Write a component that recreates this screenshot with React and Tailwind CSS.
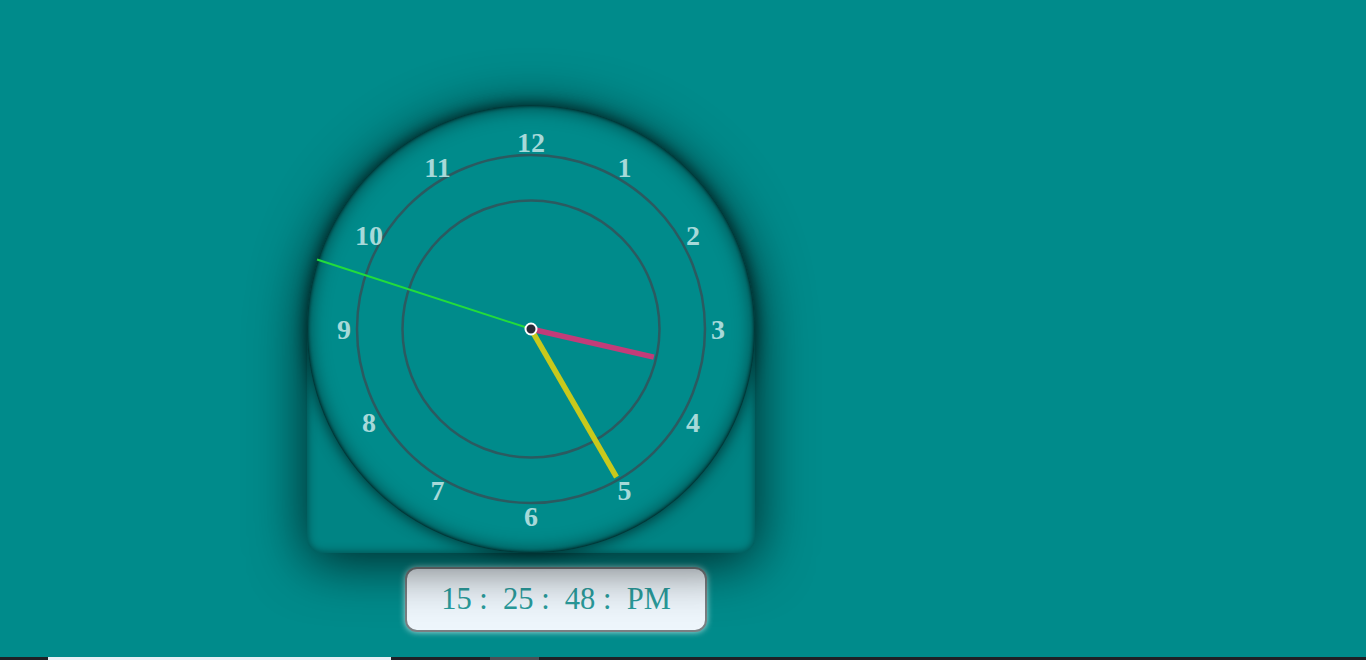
import React from "react";

const CX = 224;
const CY = 224;

const numbers = Array.from({ length: 12 }, (_, i) => {
  const n = i + 1;
  const a = (n * 30 * Math.PI) / 180;
  return { n, x: CX + 187 * Math.sin(a), y: CY - 187 * Math.cos(a) + 9.5 };
});

function handEnd(deg, len) {
  const a = (deg * Math.PI) / 180;
  return { x: CX + len * Math.sin(a), y: CY - len * Math.cos(a) };
}

const hour = handEnd(102.9, 126);
const minute = handEnd(150, 171);
const second = handEnd(288, 225);

const ClockFace = () => (
  <div className="relative w-[448px] h-[448px] rounded-[224px_224px_15px_15px] bg-[#008484] shadow-[0_8px_55px_rgba(0,0,0,0.75),inset_0_0_10px_rgba(0,0,0,0.5)]">
    <div className="absolute inset-0 rounded-full bg-[#008b8b] shadow-[0_0_16px_rgba(0,0,0,0.7),inset_0_0_4px_rgba(0,0,0,1),inset_0_0_20px_rgba(0,0,0,0.6)]" />
    <svg className="absolute inset-0" width="448" height="448" viewBox="0 0 448 448">
      <circle cx={CX} cy={CY} r="174" fill="none" stroke="#2b5a60" strokeWidth="2.5" />
      <circle cx={CX} cy={CY} r="128.5" fill="none" stroke="#2b5a60" strokeWidth="2.5" />
      {numbers.map((p) => (
        <text
          key={p.n}
          x={p.x}
          y={p.y}
          textAnchor="middle"
          fill="#a7d9d9"
          fontSize="28"
          fontWeight="700"
          fontFamily="'Liberation Serif', 'Times New Roman', serif"
        >
          {p.n}
        </text>
      ))}
      <line x1={CX} y1={CY} x2={hour.x} y2={hour.y} stroke="#c23c79" strokeWidth="5.5" />
      <line x1={CX} y1={CY} x2={minute.x} y2={minute.y} stroke="#c8c91c" strokeWidth="5.5" />
      <line x1={CX} y1={CY} x2={second.x} y2={second.y} stroke="#22dc3c" strokeWidth="2" />
      <circle cx={CX} cy={CY} r="5.5" fill="#2a2b38" stroke="#ffffff" strokeWidth="2" />
    </svg>
  </div>
);

export default function App() {
  return (
    <div className="h-screen flex flex-col overflow-hidden">
      <div className="flex-1 bg-[#008b8b] pt-[105px] pl-[307px]">
        <ClockFace />
        <div className="ml-[98px] mt-[14px] w-[302px] h-[65px] rounded-[12px] border-2 border-[#7a7f82] bg-[#eef6fc] shadow-[0_0_6px_rgba(255,255,255,0.7)] flex items-center justify-center">
          <span className="text-[30.5px] text-[#2a9c9c] font-['Liberation_Serif',serif] whitespace-pre">
            15 :  25 :  48 :  PM
          </span>
        </div>
      </div>
      <div className="h-[3px] bg-[#1e2126] flex">
        <div className="w-[48px]" />
        <div className="w-[343px] bg-[#e8f1f6]" />
        <div className="w-[99px]" />
        <div className="w-[49px] bg-[#4b4f55]" />
      </div>
    </div>
  );
}
